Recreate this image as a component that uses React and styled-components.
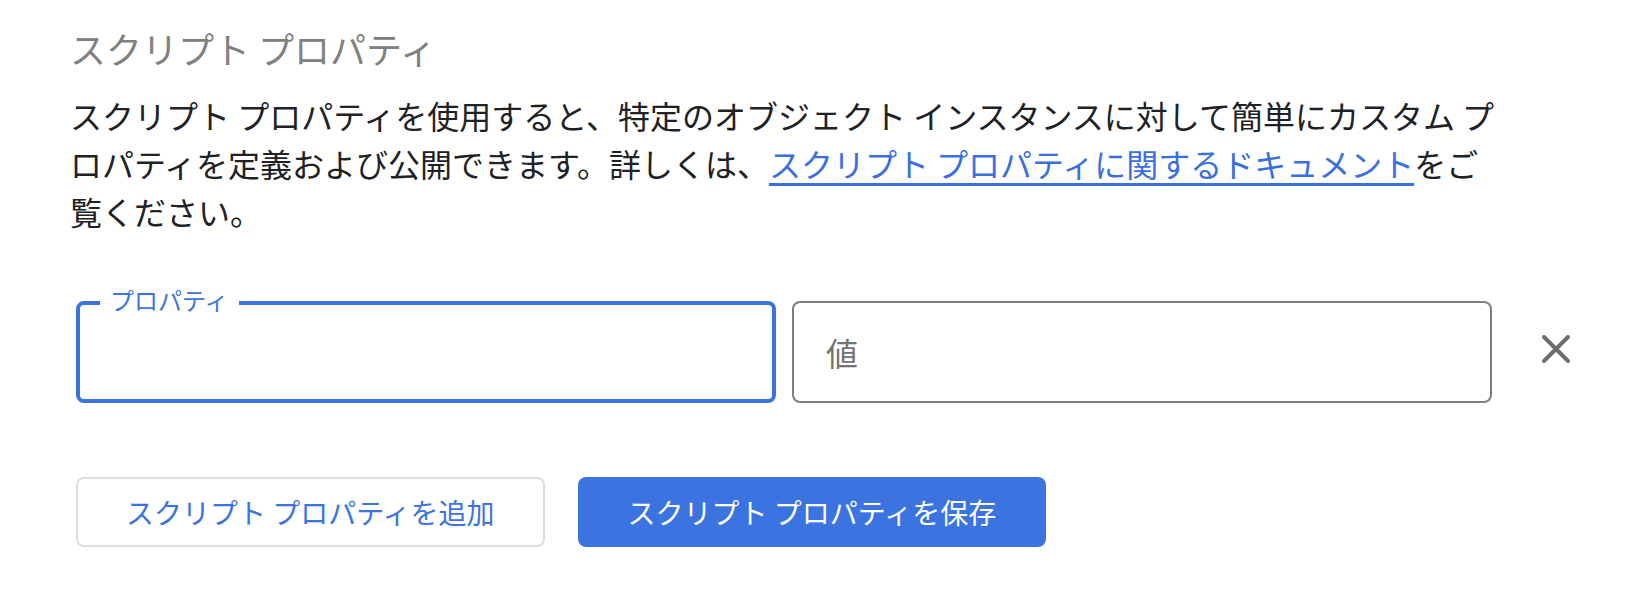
import React from "react";
import styled, { createGlobalStyle } from "styled-components";

const Global = createGlobalStyle`
  html, body { margin: 0; padding: 0; background: #ffffff; }
  body { font-family: "Noto Sans CJK JP", "Noto Sans", sans-serif; }
  * { box-sizing: border-box; }
`;

const Page = styled.div`
  padding: 24px 0 0 70px;
`;

const Title = styled.h2`
  margin: 0;
  font-size: 36px;
  line-height: 48px;
  font-weight: 400;
  color: #808080;
`;

const Description = styled.p`
  margin: 19px 0 0;
  width: 1438px;
  font-size: 32px;
  line-height: 48px;
  color: #202124;
`;

const DocLink = styled.a`
  color: #3a6fe0;
  text-decoration: underline;
  text-decoration-thickness: 3px;
  text-underline-offset: 6px;
`;

const Form = styled.div`
  padding-left: 6px;
  margin-top: 66px;
`;

const FieldRow = styled.div`
  display: flex;
  align-items: center;
  gap: 16px;
`;

const Field = styled.div`
  position: relative;
  flex: none;
  width: 700px;
  height: 102px;
  border: ${(p) => (p.$focused ? "4px solid #3b73e0" : "2px solid #7f7f7f")};
  border-radius: 8px;
  display: flex;
  align-items: center;
  padding-left: ${(p) => (p.$focused ? "30px" : "32px")};
  background: #fff;
`;

const FloatingLabel = styled.span`
  position: absolute;
  left: 20px;
  top: -19px;
  padding: 0 10px;
  background: #ffffff;
  font-size: 24px;
  line-height: 28px;
  color: #3b73e0;
`;

const Input = styled.input`
  border: none;
  outline: none;
  background: transparent;
  width: 100%;
  font-family: inherit;
  font-size: 32px;
  color: #202124;
  padding: 0;
  &::placeholder { color: #737373; }
`;

const RemoveButton = styled.button`
  flex: none;
  width: 48px;
  height: 48px;
  margin-left: 24px;
  margin-top: -6px;
  border: none;
  background: transparent;
  padding: 0;
  display: flex;
  align-items: center;
  justify-content: center;
  cursor: pointer;
`;

const ButtonRow = styled.div`
  display: flex;
  gap: 33px;
  margin-top: 74px;
`;

const ActionButton = styled.button`
  height: 70px;
  padding: 0 48px;
  border-radius: 8px;
  font-family: inherit;
  font-size: 28px;
  line-height: 1;
  border: 2px solid ${(p) => (p.$primary ? "#3b73e0" : "#dadce0")};
  background: ${(p) => (p.$primary ? "#3b73e0" : "#ffffff")};
  color: ${(p) => (p.$primary ? "#ffffff" : "#3b73e0")};
  cursor: pointer;
`;

const CloseIcon = () => (
  <svg width="30" height="30" viewBox="0 0 30 30" aria-hidden="true">
    <path d="M3 3 L27 27 M27 3 L3 27" stroke="#6e6e6e" strokeWidth="4" strokeLinecap="round" fill="none" />
  </svg>
);

export default function App() {
  return (
    <>
      <Global />
      <Page>
        <Title>スクリプト プロパティ</Title>
        <Description>
          スクリプト プロパティを使用すると、特定のオブジェクト インスタンスに対して簡単にカスタム プロパティを定義および公開できます。詳しくは、
          <DocLink href="#">スクリプト プロパティに関するドキュメント</DocLink>
          をご覧ください。
        </Description>
        <Form>
          <FieldRow>
            <Field $focused>
              <FloatingLabel>プロパティ</FloatingLabel>
              <Input aria-label="プロパティ" />
            </Field>
            <Field>
              <Input placeholder="値" aria-label="値" />
            </Field>
            <RemoveButton aria-label="削除">
              <CloseIcon />
            </RemoveButton>
          </FieldRow>
          <ButtonRow>
            <ActionButton>スクリプト プロパティを追加</ActionButton>
            <ActionButton $primary>スクリプト プロパティを保存</ActionButton>
          </ButtonRow>
        </Form>
      </Page>
    </>
  );
}
